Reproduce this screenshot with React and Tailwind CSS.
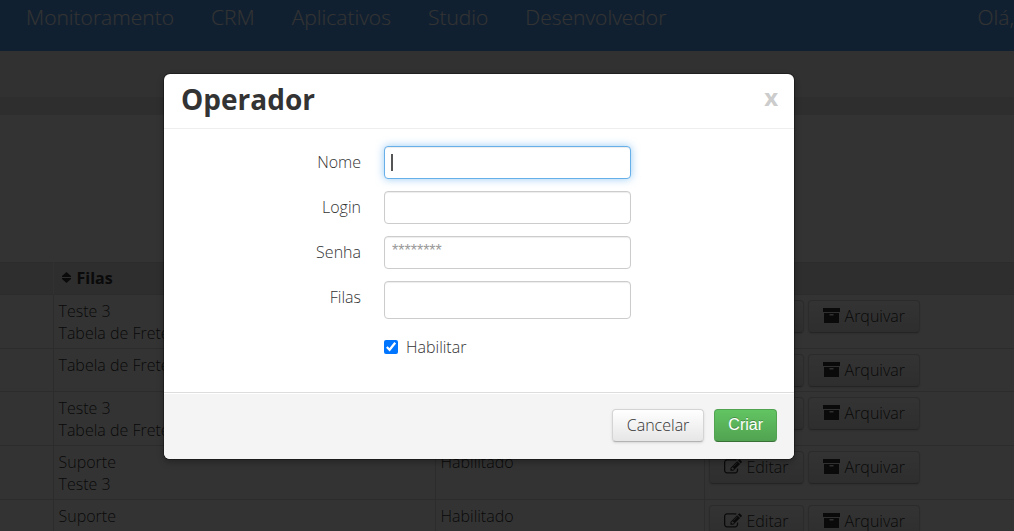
import React, { useState } from 'react';

const menu = ['Monitoramento', 'CRM', 'Aplicativos', 'Studio', 'Desenvolvedor'];

const operators = [
  { id: 1, queues: ['Teste 3', 'Tabela de Frete'], status: 'Habilitado' },
  { id: 2, queues: ['Tabela de Frete'], status: 'Habilitado' },
  { id: 3, queues: ['Teste 3', 'Tabela de Frete'], status: 'Habilitado' },
  { id: 4, queues: ['Suporte', 'Teste 3'], status: 'Habilitado' },
  { id: 5, queues: ['Suporte'], status: 'Habilitado' },
];

function EditIcon() {
  return (
    <svg viewBox="0 0 1792 1792" className="w-[18px] h-[18px] shrink-0" fill="currentColor" aria-hidden="true">
      <path d="M888 1184l116-116-152-152-116 116v56h96v96h56zm440-720q-16-16-33 1l-350 350q-17 17-1 33t33-1l350-350q17-17 1-33zm80 594v190q0 119-84.500 203.500t-203.500 84.500h-832q-119 0-203.500-84.500t-84.500-203.500v-832q0-119 84.500-203.500t203.500-84.500h832q63 0 117 25 15 7 18 23 3 17-9 29l-49 49q-14 14-32 8-23-6-45-6h-832q-66 0-113 47t-47 113v832q0 66 47 113t113 47h832q66 0 113-47t47-113v-126q0-13 9-22l64-64q15-15 35-7t20 29zm-96-738l288 288-672 672h-288v-288zm444 132l-92 92-288-288 92-92q28-28 68-28t68 28l152 152q28 28 28 68t-28 68z" />
    </svg>
  );
}

function ArchiveIcon() {
  return (
    <svg viewBox="0 0 17 15" className="w-[17px] h-[15px] shrink-0" aria-hidden="true">
      <path d="M0 0h17v4H0z" fill="currentColor" />
      <path d="M1 5h15v10H1zM6.500 6v1.500h4V6z" fill="currentColor" fillRule="evenodd" />
    </svg>
  );
}

function SortIcon() {
  return (
    <svg viewBox="0 0 9 11" className="w-[9px] h-[11px] shrink-0" fill="currentColor" aria-hidden="true">
      <path d="M4.500 0 9 4v1H0V4zM0 6h9v1l-4.500 4L0 7z" />
    </svg>
  );
}

function RowButton({ icon, children }) {
  return (
    <button
      type="button"
      className="flex items-center gap-[5px] h-[33px] px-3.5 pb-0.5 rounded border border-[#d4d4d4] border-b-[#b3b3b3] bg-gradient-to-b from-white to-[#e6e6e6] shadow-sm"
    >
      {icon}
      {children}
    </button>
  );
}

function Field({ id, label, focused, onFocus, tall, ...props }) {
  return (
    <div className="flex mb-3">
      <label htmlFor={id} className="w-[197px] mr-[23px] pt-[5px] text-right leading-[22px]">
        {label}
      </label>
      <div className="relative">
        <input
          id={id}
          onFocus={() => onFocus(id)}
          className={`block w-[247px] px-[7px] pb-1 rounded border bg-white font-['Liberation_Sans',sans-serif] font-normal text-base text-[#555] placeholder:text-[#999] outline-none caret-transparent ${
            tall ? 'h-[38px]' : 'h-[33px]'
          } ${
            focused
              ? 'border-[#66afe9] shadow-[inset_0_1px_1px_rgba(0,0,0,0.075),0_0_8px_rgba(82,168,236,0.6)]'
              : 'border-[#ccc] shadow-[inset_0_1px_1px_rgba(0,0,0,0.075)]'
          }`}
          {...props}
        />
        {/* Text caret */}
        {focused && <span className="absolute left-[7px] top-2 w-0.5 h-[17px] bg-[#555]" />}
      </div>
    </div>
  );
}

export default function App() {
  const [active, setActive] = useState('nome');
  const [enabled, setEnabled] = useState(true);

  return (
    <div className="relative h-screen overflow-hidden bg-white font-['Open_Sans',sans-serif] font-light text-base text-[#333]">
      <header className="flex justify-between h-[51px] pl-[26px] bg-[#55a0f0] text-[21px] leading-7 text-white">
        <nav className="flex gap-[37px] pt-[3px]">
          {menu.map((item) => (
            <a key={item} href="#">{item}</a>
          ))}
        </nav>
        <a href="#" className="pt-[3px]">Olá,</a>
      </header>
      <div className="h-[46px] bg-[#f3f3f3]" />
      <div className="h-[18px] bg-[#e6e6e6]" />

      <table className="w-full mt-[147px] border-collapse leading-[22px]">
        <thead>
          <tr className="h-8 bg-[#e3e3e3] border-y border-[#d9d9d9] text-left">
            <th className="w-[53px]" />
            <th className="w-[382px] px-2 pb-0.5 border-l border-[#f3f3f3] font-bold">
              <span className="flex items-center gap-1.5">
                <SortIcon />
                Filas
              </span>
            </th>
            <th className="w-[269px]" />
            <th />
          </tr>
        </thead>
        <tbody>
          {operators.map((op) => (
            <tr key={op.id} className="border-b border-[#d9d9d9] align-top">
              <td />
              <td className="px-[5px] pt-[5px] pb-1 border-l border-[#d9d9d9]">
                {op.queues.map((queue) => (
                  <div key={queue}>{queue}</div>
                ))}
              </td>
              <td className="px-[5px] pt-[5px] border-l border-[#d9d9d9]">{op.status}</td>
              <td className="px-1 pt-[5px] pb-1 border-l border-[#d9d9d9]">
                <div className="flex gap-1">
                  <RowButton icon={<EditIcon />}>Editar</RowButton>
                  <RowButton icon={<ArchiveIcon />}>Arquivar</RowButton>
                </div>
              </td>
            </tr>
          ))}
        </tbody>
      </table>

      {/* Backdrop and dialog */}
      <div className="absolute inset-0 flex items-start justify-center pt-[74px] pr-14 bg-black/80">
        <form
          role="dialog"
          aria-labelledby="dialog-title"
          onSubmit={(e) => e.preventDefault()}
          className="w-full max-w-[630px] rounded-md bg-white shadow-[0_0_0_1px_rgba(0,0,0,0.3),0_3px_7px_rgba(0,0,0,0.3)]"
        >
          <div className="flex items-center justify-between h-[55px] pb-1 pl-[17px] pr-4 border-b border-[#eee]">
            <h3 id="dialog-title" className="text-[28px] leading-9 font-bold">Operador</h3>
            <button type="button" className="pb-1 text-2xl leading-5 font-bold text-[#ccc]">x</button>
          </div>

          <div className="pt-[17px] pb-[34px]">
            <Field id="nome" label="Nome" type="text" focused={active === 'nome'} onFocus={setActive} />
            <Field id="login" label="Login" type="text" focused={active === 'login'} onFocus={setActive} />
            <Field id="senha" label="Senha" type="password" placeholder="********" focused={active === 'senha'} onFocus={setActive} />
            <Field id="filas" label="Filas" type="text" tall focused={active === 'filas'} onFocus={setActive} />
            <label className="flex items-center gap-2 ml-[220px] mt-[17px] leading-[22px]">
              <input
                type="checkbox"
                checked={enabled}
                onChange={(e) => setEnabled(e.target.checked)}
                className="w-3.5 h-3.5"
              />
              Habilitar
            </label>
          </div>

          <div className="flex justify-end gap-2.5 pt-4 pb-[17px] pr-[17px] rounded-b-md border-t border-[#ddd] bg-[#f4f4f4] shadow-[inset_0_1px_0_#fff]">
            <button
              type="button"
              className="h-[33px] px-3.5 pb-0.5 rounded border border-[#d4d4d4] border-b-[#b3b3b3] bg-gradient-to-b from-white to-[#e6e6e6] leading-[22px] shadow-sm"
            >
              Cancelar
            </button>
            <button
              type="submit"
              className="h-[33px] px-[13px] pb-0.5 rounded border border-[#51a351] border-b-[#387038] bg-gradient-to-b from-[#62c462] to-[#51a351] font-['Liberation_Sans',sans-serif] font-normal leading-[22px] text-white [text-shadow:0_-1px_0_rgba(0,0,0,0.25)]"
            >
              Criar
            </button>
          </div>
        </form>
      </div>
    </div>
  );
}
